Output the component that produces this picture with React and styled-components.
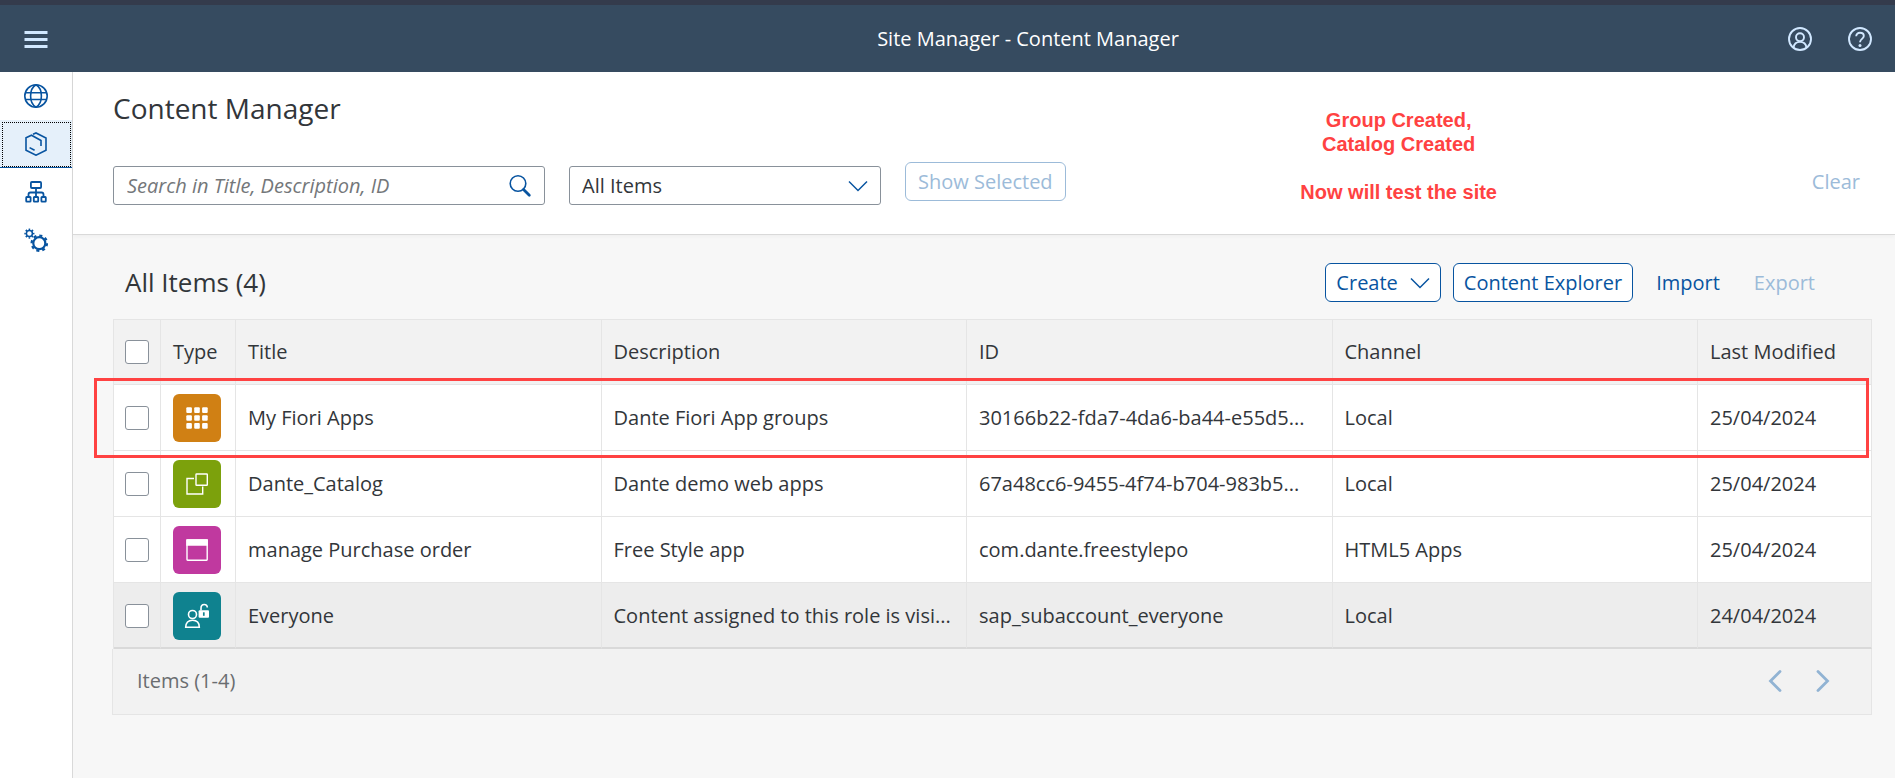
import React from 'react';
import styled, { createGlobalStyle, css } from 'styled-components';

const GlobalStyle = createGlobalStyle`
  *, *::before, *::after { box-sizing: border-box; }
  body {
    margin: 0;
    background: #f7f7f7;
    color: #32363a;
    font: 400 20px/24px "Open Sans", "Noto Sans", sans-serif;
  }
  button, input, select { font: inherit; color: inherit; margin: 0; }
`;

const Page = styled.div`
  min-height: 100vh;
  display: flex;
  flex-direction: column;
`;

const ShellBar = styled.header`
  height: 72px;
  flex: none;
  display: flex;
  align-items: stretch;
  border-top: 5px solid #343b4c;
  background: #364b60;
  color: #d1e8ff;
`;

const ShellButton = styled.button`
  width: ${(p) => p.$width}px;
  padding: 0;
  border: 0;
  background: none;
  color: #d1e8ff;
  display: flex;
  align-items: center;
  justify-content: center;
`;

const ShellTitle = styled.div`
  flex: 1;
  padding-left: 214px;
  display: flex;
  align-items: center;
  justify-content: center;
  color: #fff;
  font-weight: 500;
`;

const ShellActions = styled.div`
  display: flex;
  padding-right: 5px;
`;

const Body = styled.div`
  flex: 1;
  display: flex;
`;

const SideNav = styled.nav`
  width: 73px;
  flex: none;
  display: flex;
  flex-direction: column;
  border-right: 1px solid #d9d9d9;
  background: #fff;
`;

const NavLink = styled.a`
  height: 48px;
  padding: 2px 1px 0 2px;
  display: flex;
  color: #0854a0;
  border-bottom: 1px solid transparent;
  ${(p) => p.$selected && css`
    background: #e5f0fa;
    border-bottom-color: #0854a0;
  `}
`;

const NavFocus = styled.span`
  flex: 1;
  padding: 0 1px 1px 0;
  display: flex;
  align-items: center;
  justify-content: center;
  border: 1px dotted ${(p) => (p.$focused ? '#000' : 'transparent')};
`;

const Main = styled.main`
  flex: 1;
  min-width: 0;
`;

const FilterBar = styled.section`
  position: relative;
  padding: 18px 24px 29px 40px;
  background: #fff;
  border-bottom: 1px solid #d9d9d9;
  box-shadow: 0 2px 4px rgba(0, 0, 0, 0.03);
`;

const Heading = styled.h1`
  margin: 0 0 36px;
  font-size: 28px;
  line-height: 36px;
  font-weight: 400;
`;

const FilterRow = styled.div`
  height: 43px;
  display: flex;
  align-items: flex-start;
`;

const Field = styled.label`
  width: ${(p) => p.$width}px;
  height: 39px;
  margin-right: 24px;
  padding-right: ${(p) => p.$padEnd}px;
  align-self: flex-end;
  display: flex;
  align-items: center;
  border: 1px solid #89919a;
  border-radius: 3px;
  background: #fff;
  color: #0854a0;
`;

const SearchInput = styled.input`
  flex: 1;
  min-width: 0;
  height: 100%;
  padding: 0 0 0 13px;
  border: 0;
  outline: 0;
  background: none;
  color: #32363a;
  &::placeholder { color: #74777a; font-style: italic; opacity: 1; }
`;

const Select = styled.select`
  flex: 1;
  min-width: 0;
  height: 100%;
  padding: 0 0 0 12px;
  border: 0;
  outline: 0;
  appearance: none;
  background: none;
  color: #32363a;
`;

const Button = styled.button`
  height: 39px;
  padding: 0 ${(p) => (p.$wide ? 12 : 10)}px;
  display: flex;
  align-items: center;
  gap: 12px;
  white-space: nowrap;
  border: 1px solid ${(p) => (p.$plain ? 'transparent' : 'currentColor')};
  border-radius: 6px;
  background: ${(p) => (p.$plain ? 'transparent' : '#fff')};
  color: #0854a0;
  &:disabled { color: #9cbbd9; }
`;

const Spacer = styled.div`
  flex: 1;
`;

const Note = styled.div`
  position: absolute;
  top: 36px;
  right: 398px;
  color: #ff4242;
  font: 700 20px/24px "Liberation Sans", Arial, sans-serif;
  text-align: center;
  white-space: pre-line;
`;

const Content = styled.section`
  padding: 28px 23px 0 39px;
`;

const Toolbar = styled.div`
  height: 39px;
  margin-bottom: 17px;
  padding: 0 46px 0 13px;
  display: flex;
  align-items: center;
  gap: 12px;
`;

const TableTitle = styled.h2`
  margin: 0;
  padding-bottom: 2px;
  font-size: 26px;
  line-height: 32px;
  font-weight: 400;
`;

const TableArea = styled.div`
  position: relative;
  padding-left: 1px;
`;

const Table = styled.table`
  width: 100%;
  table-layout: fixed;
  border-collapse: separate;
  border-spacing: 0;
  border-top: 1px solid #e5e5e5;
  border-left: 1px solid #e5e5e5;
  background: #fff;
`;

const Col = styled.col`
  width: ${(p) => (p.$width ? `${p.$width}px` : 'auto')};
`;

const cell = css`
  padding: 0 11px 0 12px;
  border-right: 1px solid #e5e5e5;
  border-bottom: 1px solid #e5e5e5;
  text-align: left;
  vertical-align: middle;
  font-weight: 400;
  white-space: nowrap;
  overflow: hidden;
  text-overflow: ellipsis;
`;

const HeadCell = styled.th`
  ${cell}
  height: 65px;
  background: #f2f2f2;
`;

const Cell = styled.td`
  ${cell}
  height: 66px;
`;

const Row = styled.tr`
  background: ${(p) => (p.$shaded ? '#ededed' : '#fff')};
  &:last-child > td { padding-top: 1px; border-bottom: 2px solid #d9d9d9; }
`;

const Check = styled.input`
  appearance: none;
  display: block;
  width: 24px;
  height: 24px;
  margin: 0 0 0 -1px;
  border: 1px solid #89919a;
  border-radius: 3px;
  background: #fff;
`;

const Tile = styled.span`
  display: block;
  width: 48px;
  height: 48px;
  border-radius: 6px;
  background: ${(p) => p.$color};
  color: #fff;
`;

const RowHighlight = styled.div`
  position: absolute;
  top: 59px;
  left: -18px;
  right: 3px;
  height: 80px;
  border: 3px solid #ff4242;
  pointer-events: none;
`;

const TableFooter = styled.footer`
  height: 66px;
  padding: 0 24px 2px;
  display: flex;
  align-items: center;
  border: 1px solid #e5e5e5;
  border-top: 0;
  background: #f2f2f2;
  color: #6a6d70;
`;

const PageButton = styled.button`
  width: 48px;
  height: 48px;
  padding: 0;
  display: flex;
  align-items: center;
  justify-content: center;
  border: 0;
  background: none;
  color: #91b3d3;
`;

const Icon = ({ width = 24, height = 24, stroke = 1.6, children }) => (
  <svg
    width={width}
    height={height}
    viewBox={`0 0 ${width} ${height}`}
    fill="none"
    stroke="currentColor"
    strokeWidth={stroke}
    aria-hidden="true"
  >
    {children}
  </svg>
);

const MenuIcon = () => (
  <Icon stroke={3}>
    <path d="M.5 5.5h23M.5 12.500h23M.5 19.500h23" />
  </Icon>
);

const UserIcon = () => (
  <Icon stroke={1.9}>
    <circle cx="12" cy="12" r="11" />
    <circle cx="12" cy="10.2" r="4" />
    <path d="M5.500 20.500c.6-3.600 3.200-5.600 6.500-5.600s5.900 2 6.500 5.600" />
  </Icon>
);

const HelpIcon = () => (
  <Icon stroke={1.9}>
    <circle cx="12" cy="12" r="11" />
    <path d="M8.200 9.200c0-2.100 1.600-3.400 3.800-3.400s3.800 1.300 3.800 3.200c0 2.900-3.800 2.900-3.800 6.300" />
    <circle cx="12" cy="18.500" r="1.500" fill="currentColor" stroke="none" />
  </Icon>
);

const GlobeIcon = () => (
  <Icon>
    <circle cx="12" cy="12" r="11.200" />
    <path d="M12 .8C8.200 3 6.600 7.500 6.600 12S8.200 21 12 23.200C15.800 21 17.400 16.500 17.400 12S15.800 3 12 .8M1.500 8.700h21M1.500 15.500h21" />
  </Icon>
);

const ContentIcon = () => (
  <Icon>
    <path d="M9 2.300L12 1l10 5v12.300L12 23.200 2 18.300V5.800L7.500 3.200 17 8.500V14M5.600 15.600l5 2.700" />
  </Icon>
);

const StructureIcon = () => (
  <Icon stroke={1.8}>
    <rect x="6.900" y="2" width="10.200" height="6" rx="1" />
    <path d="M12 8v9M4.500 17v-2.500q0-2 2-2h11q2 0 2 2V17" />
    <rect x="2.200" y="17" width="4.400" height="4.700" rx=".6" />
    <rect x="9.800" y="17" width="4.400" height="4.700" rx=".6" />
    <rect x="17.400" y="17" width="4.400" height="4.700" rx=".6" />
  </Icon>
);

const SettingsIcon = () => (
  <Icon>
    <circle cx="5.400" cy="5.600" r="3" strokeWidth="1.500" />
    <circle cx="5.400" cy="5.600" r="4.300" strokeWidth="1.500" pathLength="16" strokeDasharray="1 1" strokeDashoffset=".5" />
    <circle cx="15.300" cy="15.200" r="6" strokeWidth="2.200" />
    <circle cx="15.300" cy="15.200" r="7.700" strokeWidth="2.200" pathLength="16" strokeDasharray="1 1" />
  </Icon>
);

const SearchIcon = () => (
  <Icon>
    <circle cx="10" cy="9.500" r="7.800" />
    <path d="M15.500 15.500l5.800 5.800" strokeWidth="2.800" strokeLinecap="round" />
  </Icon>
);

const ChevronDown = () => (
  <Icon width={20} height={12} stroke={1.5}>
    <path d="M1 1.500l9 9 9-9" />
  </Icon>
);

const ChevronSide = ({ next }) => (
  <Icon width={14} height={22} stroke={2.8}>
    <path d={next ? 'M2 1.500l9.500 9.500L2 20.500' : 'M12 1.500L2.500 11l9.500 9.500'} strokeLinecap="round" />
  </Icon>
);

const GroupGlyph = () => (
  <Icon width={48} height={48}>
    {[13.3, 21.2, 29.1].map((y) =>
      [13.3, 21.2, 29.1].map((x) => (
        <rect key={`${x}-${y}`} x={x} y={y} width="5.600" height="5.600" rx="1" fill="currentColor" stroke="none" />
      ))
    )}
  </Icon>
);

const CatalogGlyph = () => (
  <Icon width={48} height={48} stroke={1.4}>
    <path d="M21 18.500h-7V34h15.700v-7.500" />
    <rect x="23" y="14" width="11.300" height="11.300" rx=".6" />
  </Icon>
);

const AppGlyph = () => (
  <Icon width={48} height={48} stroke={1.4}>
    <rect x="14" y="14" width="20.200" height="20.200" rx=".6" />
    <path d="M14 14h20.200v5H14z" fill="currentColor" />
  </Icon>
);

const RoleGlyph = () => (
  <Icon width={48} height={48} stroke={1.6}>
    <circle cx="19.500" cy="22.500" r="4" />
    <path d="M12.700 35.200c0-4.600 2.600-7 6.800-7s6.800 2.400 6.800 7z" />
    <rect x="25.600" y="18.300" width="10.400" height="7.400" rx="1" fill="currentColor" stroke="none" />
    <path d="M28 18.500v-2.300c0-4.800 6.300-4.800 6.300-.7" />
    <path d="M30.800 20.300v3.500" stroke="#0f828f" strokeWidth="1.700" />
  </Icon>
);

const navItems = [
  { label: 'Site Directory', Glyph: GlobeIcon },
  { label: 'Content Manager', Glyph: ContentIcon, selected: true },
  { label: 'Channel Manager', Glyph: StructureIcon },
  { label: 'Settings', Glyph: SettingsIcon },
];

const columns = ['Type', 'Title', 'Description', 'ID', 'Channel', 'Last Modified'];

const items = [
  { color: '#d08014', Glyph: GroupGlyph, title: 'My Fiori Apps', description: 'Dante Fiori App groups', id: '30166b22-fda7-4da6-ba44-e55d5...', channel: 'Local', modified: '25/04/2024' },
  { color: '#7ca10c', Glyph: CatalogGlyph, title: 'Dante_Catalog', description: 'Dante demo web apps', id: '67a48cc6-9455-4f74-b704-983b5...', channel: 'Local', modified: '25/04/2024' },
  { color: '#c0399f', Glyph: AppGlyph, title: 'manage Purchase order', description: 'Free Style app', id: 'com.dante.freestylepo', channel: 'HTML5 Apps', modified: '25/04/2024' },
  { color: '#0f828f', Glyph: RoleGlyph, title: 'Everyone', description: 'Content assigned to this role is visi...', id: 'sap_subaccount_everyone', channel: 'Local', modified: '24/04/2024', shaded: true },
];

export default function App() {
  return (
    <Page>
      <GlobalStyle />
      <ShellBar>
        <ShellButton $width={72} aria-label="Menu"><MenuIcon /></ShellButton>
        <ShellTitle>Site Manager - Content Manager</ShellTitle>
        <ShellActions>
          <ShellButton $width={60} aria-label="Profile"><UserIcon /></ShellButton>
          <ShellButton $width={60} aria-label="Help"><HelpIcon /></ShellButton>
        </ShellActions>
      </ShellBar>
      <Body>
        <SideNav>
          {navItems.map(({ label, Glyph, selected }) => (
            <NavLink key={label} href="#" aria-label={label} $selected={selected}>
              <NavFocus $focused={selected}><Glyph /></NavFocus>
            </NavLink>
          ))}
        </SideNav>
        <Main>
          <FilterBar>
            <Heading>Content Manager</Heading>
            <FilterRow>
              <Field $width={432} $padEnd={12}>
                <SearchInput type="text" placeholder="Search in Title, Description, ID" aria-label="Search" />
                <SearchIcon />
              </Field>
              <Field $width={312} $padEnd={12}>
                <Select aria-label="Item type" defaultValue="all">
                  <option value="all">All Items</option>
                </Select>
                <ChevronDown />
              </Field>
              <Button $wide disabled>Show Selected</Button>
              <Spacer />
              <Button $plain disabled>Clear</Button>
            </FilterRow>
            <Note>{'Group Created,\nCatalog Created\n\nNow will test the site'}</Note>
          </FilterBar>
          <Content>
            <Toolbar>
              <TableTitle>All Items (4)</TableTitle>
              <Spacer />
              <Button>Create <ChevronDown /></Button>
              <Button>Content Explorer</Button>
              <Button $plain>Import</Button>
              <Button $plain disabled>Export</Button>
            </Toolbar>
            <TableArea>
              <Table>
                <colgroup>
                  <Col $width={47} />
                  <Col $width={75} />
                  <Col />
                  <Col />
                  <Col />
                  <Col />
                  <Col $width={174} />
                </colgroup>
                <thead>
                  <tr>
                    <HeadCell><Check type="checkbox" aria-label="Select all" /></HeadCell>
                    {columns.map((name) => <HeadCell key={name} scope="col">{name}</HeadCell>)}
                  </tr>
                </thead>
                <tbody>
                  {items.map(({ Glyph, ...item }) => (
                    <Row key={item.title} $shaded={item.shaded}>
                      <Cell><Check type="checkbox" aria-label={`Select ${item.title}`} /></Cell>
                      <Cell><Tile $color={item.color}><Glyph /></Tile></Cell>
                      <Cell>{item.title}</Cell>
                      <Cell>{item.description}</Cell>
                      <Cell>{item.id}</Cell>
                      <Cell>{item.channel}</Cell>
                      <Cell>{item.modified}</Cell>
                    </Row>
                  ))}
                </tbody>
              </Table>
              <RowHighlight />
            </TableArea>
            <TableFooter>
              <span>Items (1-4)</span>
              <Spacer />
              <PageButton aria-label="Previous page"><ChevronSide /></PageButton>
              <PageButton aria-label="Next page"><ChevronSide next /></PageButton>
            </TableFooter>
          </Content>
        </Main>
      </Body>
    </Page>
  );
}
